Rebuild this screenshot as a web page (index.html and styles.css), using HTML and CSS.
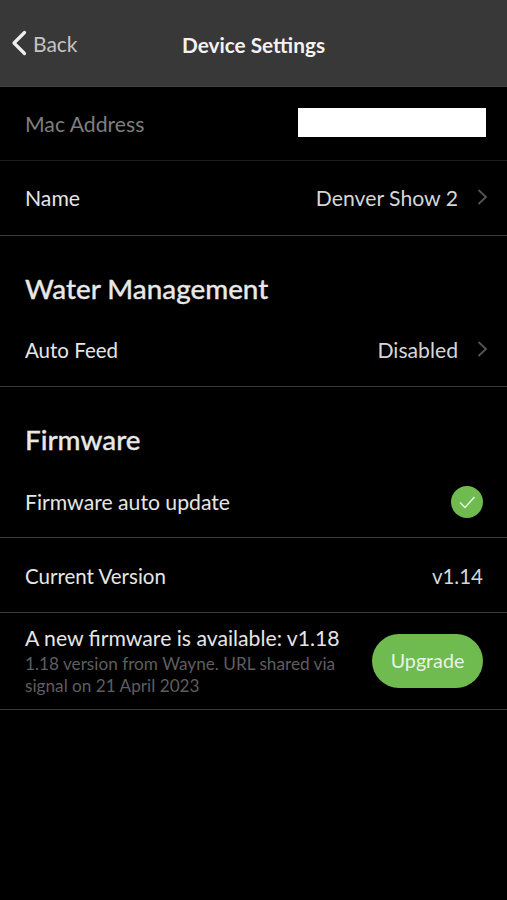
FILE: index.html
```html
<!DOCTYPE html>
<html lang="en">
<head>
<meta charset="utf-8">
<title>Device Settings</title>
<link rel="stylesheet" href="styles.css">
</head>
<body>
<header class="header">
  <a class="back">
    <svg class="back-icon" width="16" height="26" viewBox="0 0 16 26"><path d="M13.5 2.5 3 13l10.500 10.500" fill="none" stroke="#eee" stroke-width="3.2" stroke-linecap="round" stroke-linejoin="round"/></svg>
    <span>Back</span>
  </a>
  <h1 class="title">Device Settings</h1>
</header>
<main>
  <div class="row row-mac">
    <span class="label muted">Mac Address</span>
    <span class="redact"></span>
  </div>
  <div class="row row-name">
    <span class="label">Name</span>
    <span class="value">Denver Show 2
      <svg class="chev" width="11" height="18" viewBox="0 0 11 18"><path d="M1.5 2 9 9l-7.500 7" fill="none" stroke="#555" stroke-width="1.800"/></svg>
    </span>
  </div>
  <h2 class="section section-water">Water Management</h2>
  <div class="row row-sub row-feed">
    <span class="label tight">Auto Feed</span>
    <span class="value">Disabled
      <svg class="chev" width="11" height="18" viewBox="0 0 11 18"><path d="M1.5 2 9 9l-7.500 7" fill="none" stroke="#555" stroke-width="1.800"/></svg>
    </span>
  </div>
  <h2 class="section section-fw">Firmware</h2>
  <div class="row row-sub">
    <span class="label">Firmware auto update</span>
    <svg class="check" width="32" height="32" viewBox="0 0 32 32"><circle cx="16" cy="16" r="16" fill="#6fbb4f"/><path d="M9 16.500l5 5 9.500-10.500" fill="none" stroke="#e8f4e2" stroke-width="1.500"/></svg>
  </div>
  <div class="row row-version">
    <span class="label tight">Current Version</span>
    <span class="value tight">v1.14</span>
  </div>
  <div class="row row-new">
    <div class="new-text">
      <div class="label">A new firmware is available: v1.18</div>
      <div class="note">1.18 version from Wayne. URL shared via<br>signal on 21 April 2023</div>
    </div>
    <button class="upgrade">Upgrade</button>
  </div>
</main>
</body>
</html>
```
FILE: styles.css
```css
* { box-sizing: border-box; margin: 0; padding: 0; }
html, body { background: #000; }
body {
  width: 507px;
  height: 900px;
  overflow: hidden;
  font-family: "Lato", "Noto Sans", sans-serif;
  color: #ececec;
}
.header {
  height: 87px;
  background: #383838;
  border-bottom: 1px solid #444;
  display: flex;
  align-items: center;
  justify-content: center;
  position: relative;
  padding-top: 3px;
}
.back {
  position: absolute;
  left: 11px;
  top: 30px;
  display: flex;
  align-items: center;
  gap: 6px;
  font-size: 21px;
  color: #c4c4c4;
}
.title { font-size: 20.800px; font-weight: 700; color: #f2f2f2; }
.row {
  display: flex;
  align-items: center;
  justify-content: space-between;
  padding: 0 24px 0 25px;
  border-bottom: 1px solid #3a3a3a;
}
.label { font-size: 21.200px; color: #e6e6e6; }
.muted { color: #7e7e7e; }
.value { display: flex; align-items: center; gap: 19px; font-size: 21.200px; color: #d6d6d6; }
.label.tight, .value.tight { font-size: 20.500px; }
.chev { margin-right: -5px; margin-top: -2px; }
.redact { width: 188px; height: 29px; background: #fff; margin: -2px -3px 0 0; }
.row-mac { height: 74px; border-bottom-color: #1e1e1e; }
.row-name { height: 75px; }
.section {
  font-size: 27.800px;
  font-weight: 500;
  color: #e8e8e8;
  padding: 0 25px;
  line-height: 34px;
  -webkit-text-stroke: 0.3px #e8e8e8;
}
.section-water { padding-top: 36px; }
.section-fw { padding-top: 36px; }
.row-sub { height: 81px; padding-top: 9px; }
.row-feed { padding-top: 8px; }
.row-version { height: 75px; padding-top: 2px; }
.row-new { height: 97px; }
.new-text .label { line-height: 24px; }
.note { font-size: 17.200px; line-height: 22px; color: #5e5e5e; margin-top: 3px; }
.upgrade {
  width: 111px;
  height: 54px;
  border: none;
  border-radius: 27px;
  background: #6fbb4f;
  color: #e9f4e3;
  font-family: inherit;
  font-size: 19.700px;
  padding-bottom: 2px;
}
```
